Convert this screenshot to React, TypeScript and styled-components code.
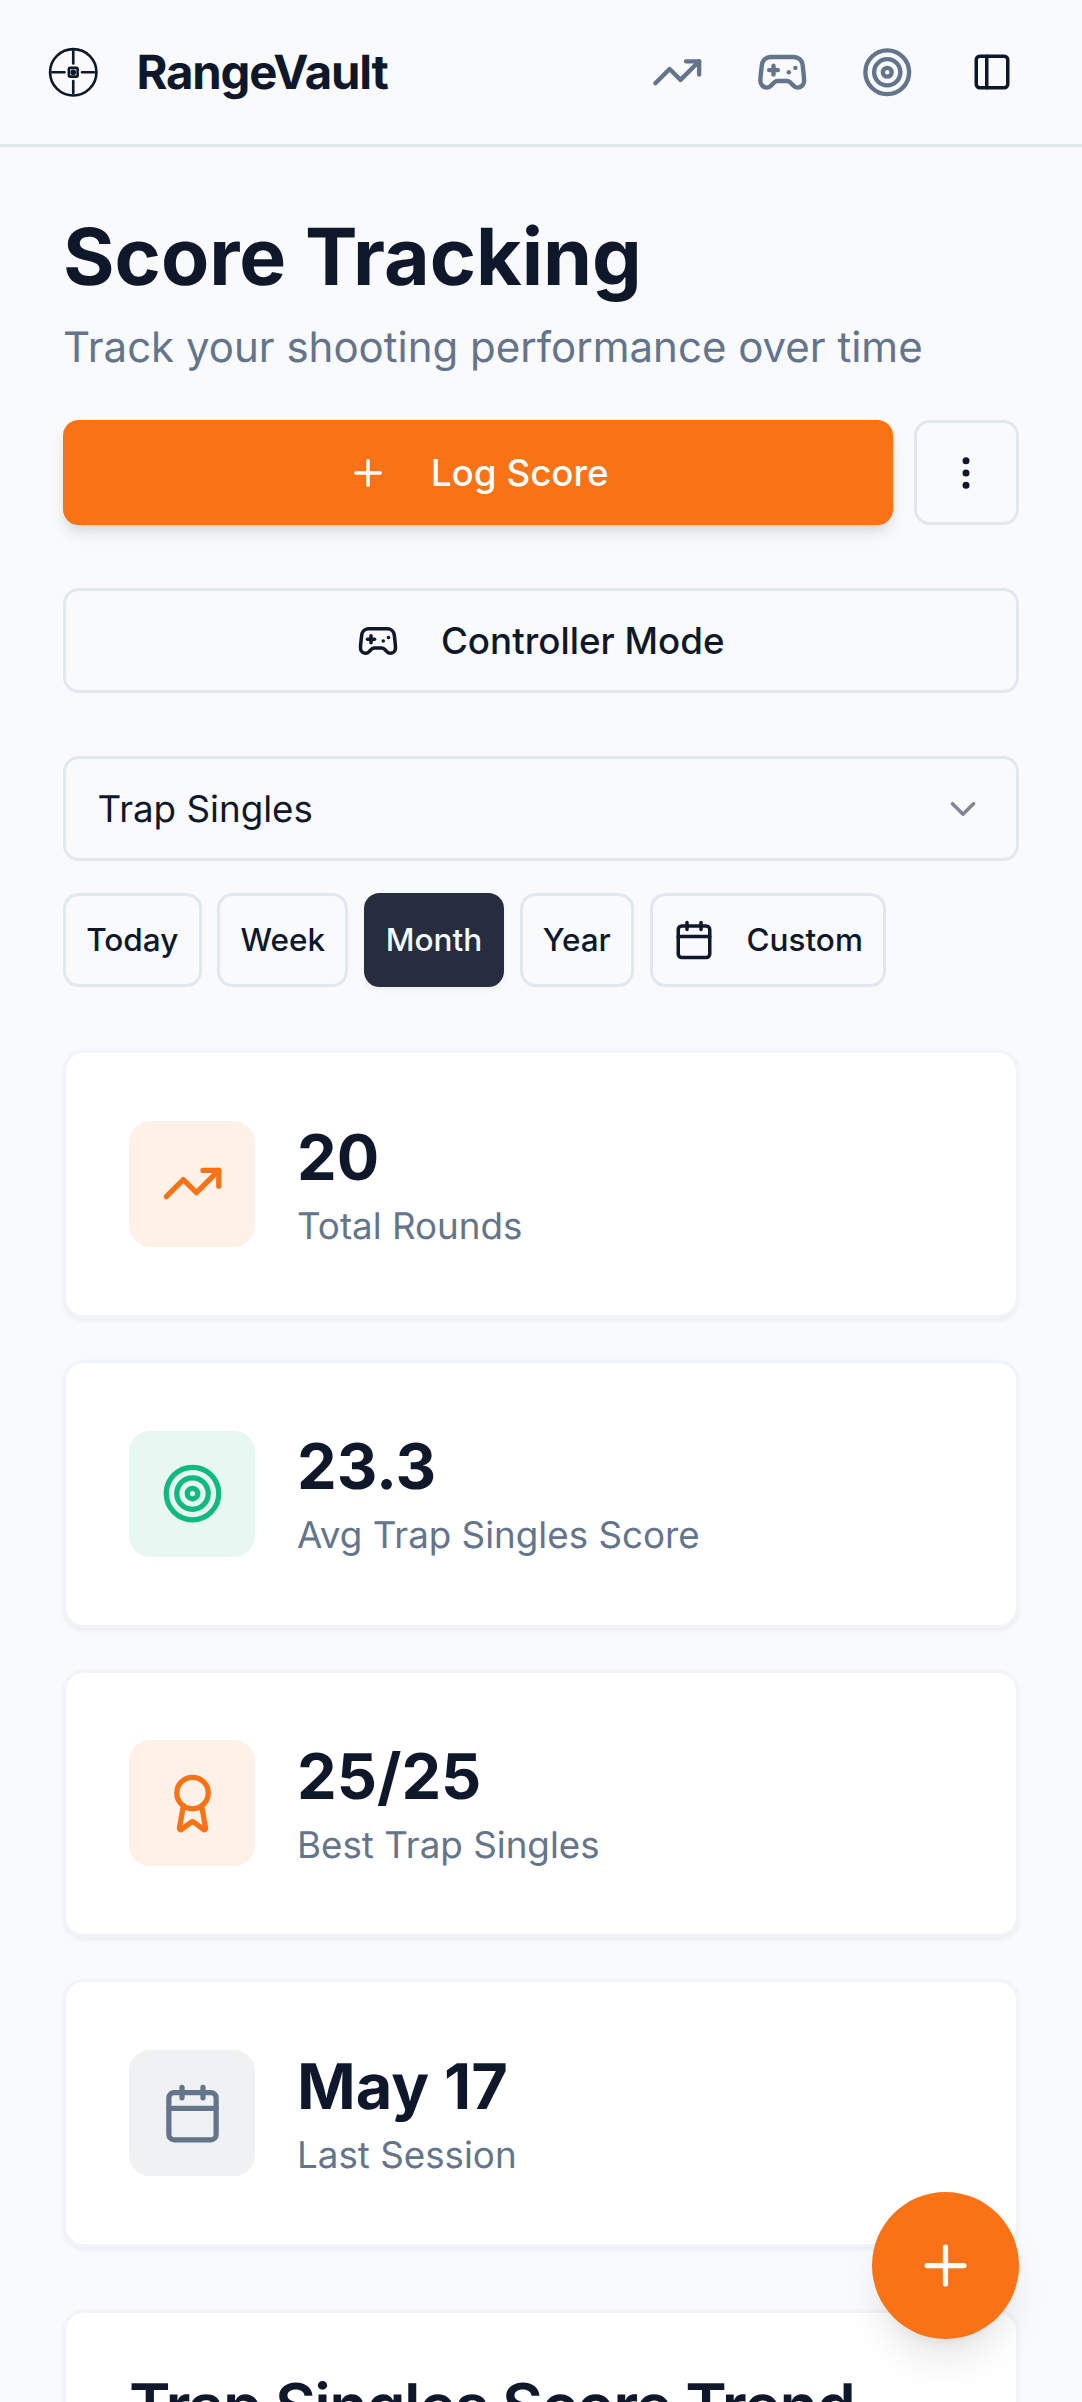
import React from "react";
import styled, { createGlobalStyle } from "styled-components";
import {
  Award,
  Calendar,
  ChevronDown,
  EllipsisVertical,
  Gamepad2,
  PanelLeft,
  Plus,
  Target,
  TrendingUp,
} from "lucide-react";

// The whole page is written in device-independent px of a 412 wide phone
const GlobalStyle = createGlobalStyle`
  html {
    zoom: 2.625;
    width: 412px;
    overflow: hidden;
  }
  body {
    margin: 0;
    color: #0f172a;
    font-family: Inter, "Noto Sans", sans-serif;
    text-rendering: geometricPrecision;
  }
  html, body {
    background: #f8fafc;
  }
  * {
    box-sizing: border-box;
  }
`;

// 1.15px lands on the 3 device pixels the hairlines have in the picture
const line = "1.15px solid #e2e8f0";

const Header = styled.header`
  display: flex;
  align-items: center;
  height: 56px;
  padding: 0 14px 0 18px;
  border-bottom: ${line};
`;

const Logo = styled.svg`
  width: 20px;
  height: 20px;
  flex-shrink: 0;
  margin-right: 14px;
`;

const Brand = styled.span`
  padding-top: 0.4px;
  font-size: 18px;
  line-height: 28px;
  font-weight: 700;
  letter-spacing: -0.45px;
`;

const HeaderActions = styled.nav`
  display: flex;
  align-items: center;
  margin-left: auto;
`;

const HeaderIcon = styled.span<{ $dark?: boolean }>`
  display: flex;
  align-items: center;
  justify-content: center;
  width: 40px;
  height: 40px;
  color: ${(p) => (p.$dark ? "#0f172a" : "#64748b")};
`;

const Main = styled.main`
  padding: 24px;
`;

const Title = styled.h1`
  margin: 0;
  font-size: 30px;
  line-height: 36px;
  font-weight: 700;
`;

const Subtitle = styled.p`
  margin: 4px 0 15px;
  font-size: 16px;
  line-height: 25px;
  color: #64748b;
`;

const ActionRow = styled.div`
  display: flex;
  gap: 8px;
  margin-bottom: 24px;
`;

const Button = styled.button`
  display: flex;
  align-items: center;
  justify-content: center;
  gap: 16px;
  height: 40px;
  padding: 0.4px 16px 0;
  border: ${line};
  border-radius: 6px;
  background: #f8fafc;
  color: #0f172a;
  font: 500 14px/20px Inter, sans-serif;
`;

const PrimaryButton = styled(Button)`
  flex: 1;
  border: none;
  background: #f97316;
  color: #fff;
  box-shadow: 0 4px 6px -1px rgba(0, 0, 0, 0.1), 0 2px 4px -2px rgba(0, 0, 0, 0.1);
`;

const MoreButton = styled(Button)`
  width: 40px;
  padding: 0;
`;

const WideButton = styled(Button)`
  width: 100%;
  margin-bottom: 24px;
`;

const Select = styled.div`
  display: flex;
  align-items: center;
  justify-content: space-between;
  height: 40px;
  padding: 0.4px 12px 0;
  margin-bottom: 12px;
  border: ${line};
  border-radius: 6px;
  font-size: 14px;
  line-height: 20px;

  svg {
    opacity: 0.5;
  }
`;

const Chips = styled.div`
  display: flex;
  gap: 6px;
  margin-bottom: 24px;
`;

const Chip = styled.button<{ $active?: boolean }>`
  display: flex;
  align-items: center;
  gap: 12px;
  height: 36px;
  padding: 0 ${(p) => (p.$active ? "7.1px" : "7.7px")};
  border: 1.15px solid ${(p) => (p.$active ? "#262d3e" : "#e2e8f0")};
  border-radius: 6px;
  background: ${(p) => (p.$active ? "#262d3e" : "#f8fafc")};
  color: ${(p) => (p.$active ? "#f8fafc" : "#0f172a")};
  box-shadow: ${(p) => (p.$active ? "0 1px 2px rgba(0, 0, 0, 0.05)" : "none")};
  font: 500 12px/16px Inter, sans-serif;
`;

const Stats = styled.section`
  display: flex;
  flex-direction: column;
  gap: 16px;
  margin-bottom: 24px;
`;

const Card = styled.article`
  border: 1.15px solid #f1f4f8;
  border-radius: 8px;
  background: #fff;
  box-shadow: 0 1px 2px rgba(0, 0, 0, 0.05);
`;

const StatCard = styled(Card)`
  display: flex;
  align-items: center;
  gap: 16px;
  height: 102px;
  padding: 0 24px;
`;

const Tile = styled.div<{ $bg: string; $fg: string }>`
  display: flex;
  align-items: center;
  justify-content: center;
  width: 48px;
  height: 48px;
  border-radius: 8px;
  background: ${(p) => p.$bg};
  color: ${(p) => p.$fg};
`;

const StatValue = styled.div`
  font-size: 24px;
  line-height: 32px;
  font-weight: 700;
`;

const StatLabel = styled.div`
  font-size: 14px;
  line-height: 20px;
  color: #64748b;
`;

const ChartCard = styled(Card)`
  padding: 24px;
  height: 320px;
`;

const ChartTitle = styled.h2`
  margin: 0;
  font-size: 24px;
  line-height: 24px;
  font-weight: 600;
  letter-spacing: -0.6px;
`;

const Fab = styled.button`
  position: fixed;
  left: 332px;
  bottom: 24px;
  display: flex;
  align-items: center;
  justify-content: center;
  width: 56px;
  height: 56px;
  border: none;
  border-radius: 50%;
  background: #f97316;
  color: #fff;
  box-shadow: 0 10px 15px -3px rgba(0, 0, 0, 0.1), 0 4px 6px -4px rgba(0, 0, 0, 0.1);
`;

const stats = [
  { icon: TrendingUp, value: "20", label: "Total Rounds", bg: "#fef1e8", fg: "#f97316" },
  { icon: Target, value: "23.3", label: "Avg Trap Singles Score", bg: "#e7f8f2", fg: "#10b981" },
  { icon: Award, value: "25/25", label: "Best Trap Singles", bg: "#fef1e8", fg: "#f97316" },
  { icon: Calendar, value: "May 17", label: "Last Session", bg: "#f0f1f3", fg: "#64748b" },
];

const App = () => {
  return (
    <>
      <GlobalStyle />
      <Header>
        <Logo viewBox="0 0 24 24" fill="none" stroke="#0f172a" strokeWidth="1.2" strokeLinecap="round">
          <circle cx="12" cy="12" r="10.6" />
          <path d="M12 2.4V8M12 16v5.6M2.4 12H8M16 12h5.6" />
          <rect x="10" y="10" width="4" height="4" rx="0.6" />
          <circle cx="12" cy="12" r="0.7" fill="#0f172a" />
        </Logo>
        <Brand>RangeVault</Brand>
        <HeaderActions>
          <HeaderIcon><TrendingUp size={20} /></HeaderIcon>
          <HeaderIcon><Gamepad2 size={20} /></HeaderIcon>
          <HeaderIcon><Target size={20} /></HeaderIcon>
          <HeaderIcon $dark><PanelLeft size={16} /></HeaderIcon>
        </HeaderActions>
      </Header>
      <Main>
        <Title>Score Tracking</Title>
        <Subtitle>Track your shooting performance over time</Subtitle>
        <ActionRow>
          <PrimaryButton><Plus size={16} />Log Score</PrimaryButton>
          <MoreButton><EllipsisVertical size={16} /></MoreButton>
        </ActionRow>
        <WideButton><Gamepad2 size={16} />Controller Mode</WideButton>
        <Select>
          Trap Singles
          <ChevronDown size={16} />
        </Select>
        <Chips>
          <Chip>Today</Chip>
          <Chip>Week</Chip>
          <Chip $active>Month</Chip>
          <Chip>Year</Chip>
          <Chip><Calendar size={16} />Custom</Chip>
        </Chips>
        <Stats>
          {stats.map((s) => (
            <StatCard key={s.label}>
              <Tile $bg={s.bg} $fg={s.fg}><s.icon size={24} /></Tile>
              <div>
                <StatValue>{s.value}</StatValue>
                <StatLabel>{s.label}</StatLabel>
              </div>
            </StatCard>
          ))}
        </Stats>
        <ChartCard>
          <ChartTitle>Trap Singles Score Trend</ChartTitle>
        </ChartCard>
      </Main>
      <Fab><Plus size={24} /></Fab>
    </>
  );
};

export default App;
